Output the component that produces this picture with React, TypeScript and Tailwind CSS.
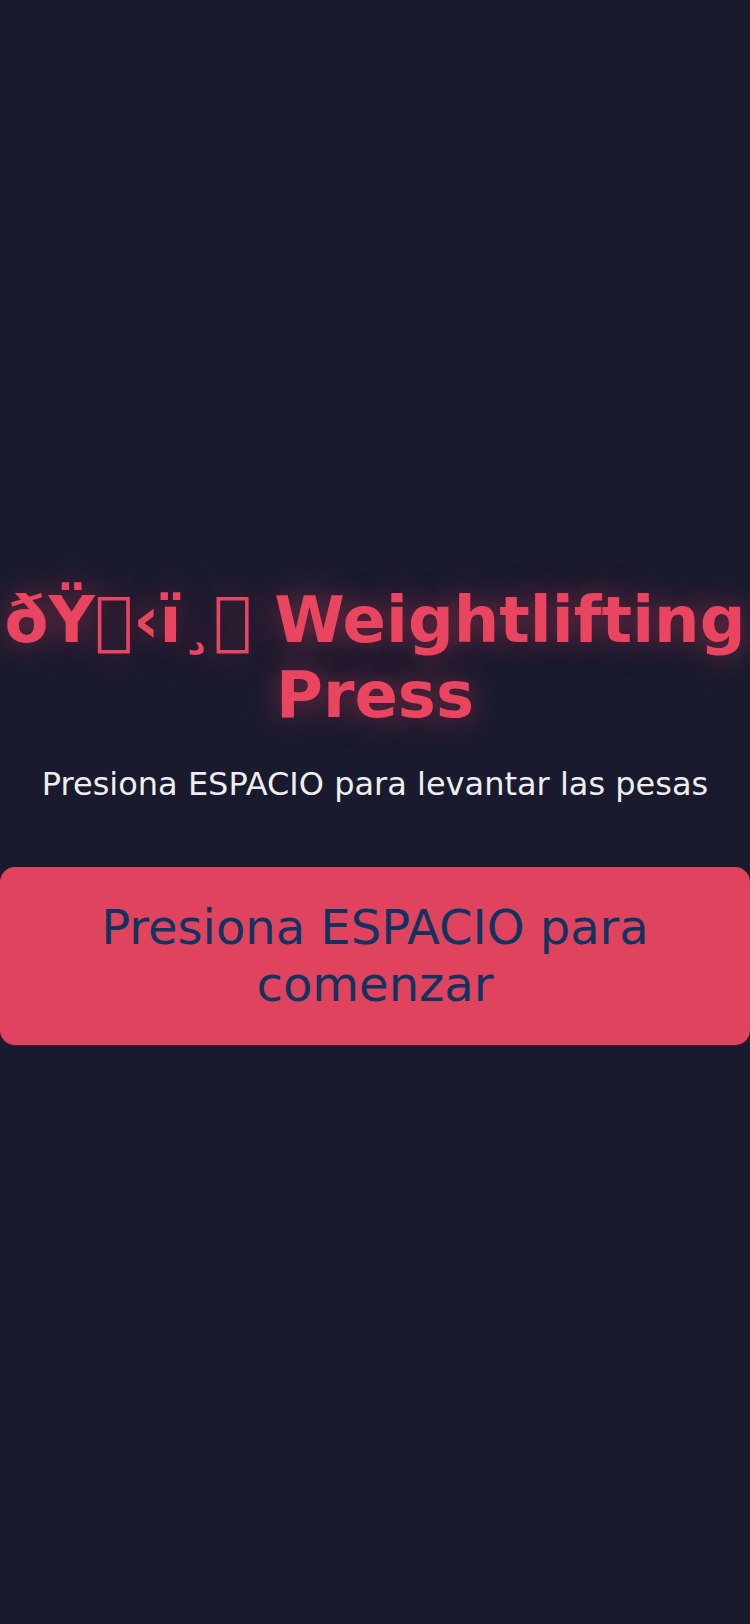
import React from 'react';

// Title comes through with a garbled emoji prefix, kept as-is
const TITLE_PREFIX = '\u00F0\u0178\uE000\u2039\u00EF\u00B8\uE000';

const App = () => {
  return (
    <div
      className="min-h-screen w-full bg-[#1a1a2e] flex flex-col items-center justify-center pt-1 text-center"
      style={{ fontFamily: '"DejaVu Sans", sans-serif' }}
    >
      <h1 className="text-[64px] font-bold text-[#e94560] leading-[75.5px] [text-shadow:0_0_30px_rgba(233,69,96,0.5)]">
        {TITLE_PREFIX} Weightlifting Press
      </h1>
      <p className="mt-8 text-[32px] leading-[1.164] text-[#eeeeee]">
        Presiona ESPACIO para levantar las pesas
      </p>
      <div className="mt-16 w-full rounded-[15px] bg-[#e0435e] py-8 px-4 text-[48px] leading-[57px] text-[#0f3460] shadow-[0_1px_0_rgba(120,30,50,0.6)]">
        Presiona ESPACIO para comenzar
      </div>
    </div>
  );
};

export default App;
